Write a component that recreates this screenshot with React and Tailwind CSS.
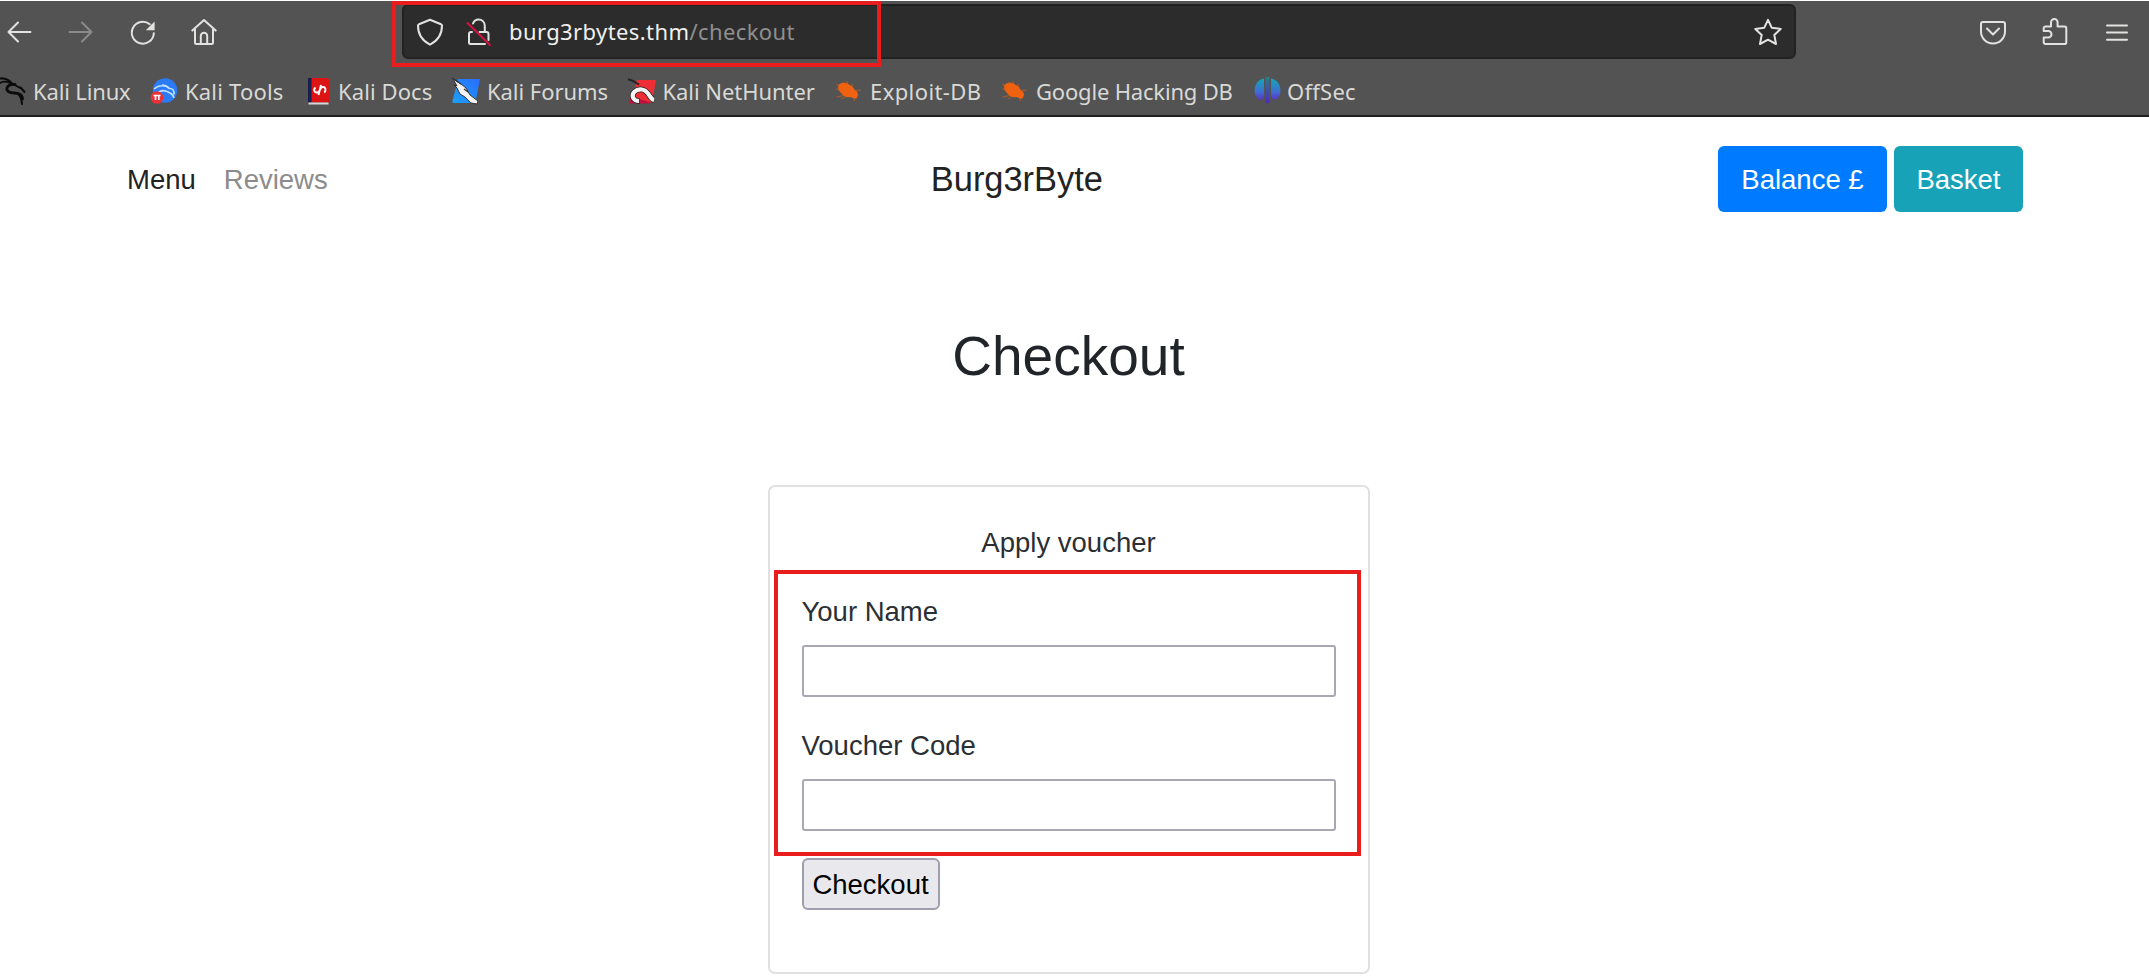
import React from "react";

const line = "fill-none stroke-[#e2e2e0] stroke-2";

function Icon({ children, className = "" }) {
  return (
    <svg viewBox="0 0 28 28" className={`size-7 shrink-0 overflow-visible ${line} ${className}`} strokeLinecap="round" strokeLinejoin="round">
      {children}
    </svg>
  );
}

const BackIcon = () => (
  <Icon><path d="M25.500 14H3.500M13 4.500 3.500 14l9.500 9.500" /></Icon>
);
const ForwardIcon = () => (
  <Icon className="opacity-40"><path d="M2.500 14h22M15 4.500l9.500 9.500-9.500 9.500" /></Icon>
);
const ReloadIcon = () => (
  <Icon>
    <path d="M24.800 15.200A11 11 0 1 1 20.800 6.200" />
    <path d="M25.600 3.400v8.800h-8.800z" className="fill-[#e2e2e0] stroke-none" />
  </Icon>
);
const HomeIcon = () => (
  <Icon>
    <path d="M1.300 12.600 13 2l11.700 10.600M4 11.500V24.500a1.500 1.500 0 0 0 1.500 1.500h15a1.500 1.500 0 0 0 1.500-1.500V11.500" />
    <path d="M9.800 25.500v-7.500a3.200 3.200 0 0 1 6.400 0v7.500" />
  </Icon>
);
const ShieldIcon = () => (
  <Icon>
    <path d="M14 1.800 25 6.200a1.500 1.500 0 0 1 1 1.400C26 15.800 21.500 23 14 26.700 6.500 23 2 15.800 2 7.600a1.500 1.500 0 0 1 1-1.400z" />
  </Icon>
);
const LockOffIcon = () => (
  <Icon>
    <path d="M9 5.500C10 3 12 1.500 14.500 1.500c3.800 0 6.300 2.800 6.300 6.500v5M8 14H7a2 2 0 0 0-2 2v8.500A1.500 1.500 0 0 0 6.500 26H21M15.500 14h7a2 2 0 0 1 2 2v6" />
    <path d="M3.500 5 26 27" className="stroke-[#d3123f]" />
  </Icon>
);
const StarIcon = () => (
  <Icon>
    <path d="m14 1.800 3.700 7.900 9 1.200-6.400 6 1.700 9.100-8-4.300-8 4.300 1.700-9.100-6.400-6 9-1.200z" />
  </Icon>
);
const PocketIcon = () => (
  <Icon>
    <path d="M4 4h20a2 2 0 0 1 2 2v7.500a12 12 0 0 1-24 0V6a2 2 0 0 1 2-2z" />
    <path d="m8 10.500 6 6 6-6" />
  </Icon>
);
const PuzzleIcon = () => (
  <Icon>
    <path d="M4.500 8.500H10V4.300a3.300 3.300 0 0 1 6.600 0v4.200h6.900A1.800 1.800 0 0 1 25.300 10.300v14a1.800 1.800 0 0 1-1.800 1.800h-19a1.800 1.800 0 0 1-1.800-1.800V19.500h4.500a3.300 3.300 0 0 0 0-6.600H2.700v-2.600a1.800 1.800 0 0 1 1.800-1.800z" />
  </Icon>
);
const MenuIcon = () => (
  <Icon><path d="M4 7.500h20M4 14.500h20M4 21.700h20" /></Icon>
);

function Mark({ children }) {
  return <svg viewBox="0 0 28 28" className="size-7 shrink-0 overflow-visible">{children}</svg>;
}

const DragonMark = () => (
  <Mark>
    <g className="fill-none stroke-[#0b0b0b]" strokeLinecap="round" strokeLinejoin="round">
      <path d="M0 2C5 .5 10 1.500 14.500 7" strokeWidth="2" />
      <path d="M1 6.500c4-2.500 8-2.500 12 0" strokeWidth="1.800" />
      <path d="M17 7.500c-4-.5-7 .5-8 3.500-1 3.500 3 5 7 5 5 0 8.500 2 8.500 6" strokeWidth="2.800" />
      <path d="M16 7.500l8 4.500M22.500 10.500l4 4.500M19 16c3 2 4.500 5 5 11" strokeWidth="2" />
    </g>
  </Mark>
);
const ToolsMark = () => (
  <Mark>
    <circle cx="15" cy="13.500" r="12.200" className="fill-[#2b7bf6]" />
    <path d="M4 12c5-4.500 12-4 15-.5 3.500-.5 5.500 2 5 6M8 15.500c4-3 9-1.500 12 .5 2.500 1 3.500 3 4 5M12 8c3 0 5 1 7 3" className="fill-none stroke-[#bfe0ff]" strokeWidth="1.600" />
    <circle cx="7" cy="20.500" r="6.300" className="fill-[#ec3038]" />
    <path d="M3.500 18.500h7M5.500 18.500v4.500M8.800 18.500v4.500" className="fill-none stroke-white" strokeWidth="1.600" />
  </Mark>
);
const DocsMark = () => (
  <Mark>
    <path d="M5 1H9v24.500H5z" className="fill-[#1b1f4e]" />
    <path d="M8.500 1h15.500a2 2 0 0 1 2 2v22.500H8.500z" className="fill-[#dc1414]" />
    <path d="M5.500 25.500h20v2h-20z" className="fill-[#d8d8d8]" />
    <path d="M12.500 10.500c-2.500 2-1 5.500 1.800 5 3-.5 2.500-5 5.200-5.500 3-.5 4 3 1.800 5.500M18 8l-2.500 10" className="fill-none stroke-white" strokeWidth="1.900" />
  </Mark>
);
const ForumsMark = () => (
  <Mark>
    <defs>
      <linearGradient id="forums" x1="1" y1="0" x2="0" y2="1">
        <stop offset="0" stopColor="#2a6cfb" />
        <stop offset="1" stopColor="#1ba2fb" />
      </linearGradient>
    </defs>
    <path d="M6 2h22l-4.500 23a1.500 1.500 0 0 1-1.500 1H2a1.500 1.500 0 0 1-1.500-2z" fill="url(#forums)" />
    <path d="M1 2l8 5 5 4 4 7 8 6-1 3-6-1-6-6-5-3-3-6-3-3 3 1z" className="fill-[#f4f4f4] stroke-[#333]" strokeWidth="1" />
    <path d="M0 1l9 6M12 12l4 3" className="fill-none stroke-[#333]" strokeWidth="1.200" />
  </Mark>
);
const NetHunterMark = () => (
  <Mark>
    <path d="M9 3h19l-4 22.500H3z" className="fill-[#ef2d35]" />
    <path d="M2 19l21 6.500-1.500 1H2z" className="fill-[#c2103d]" />
    <path d="M26 23c-4.500-1-5-9.500-12-10.500-6-1-10.500 3.500-9 8 1 2.500 3.500 3.500 6.500 3.500" className="fill-none stroke-[#222]" strokeWidth="5.600" />
    <path d="M26 23c-4.500-1-5-9.500-12-10.500-6-1-10.500 3.500-9 8 1 2.500 3 3.500 6 3.500" className="fill-none stroke-[#f4f4f4]" strokeWidth="4.200" />
    <path d="M0 2.500c4 0 7 3 11 5" className="fill-none stroke-[#222]" strokeWidth="2" />
  </Mark>
);
const BugMark = () => (
  <Mark>
    <g transform="translate(-1.500)">
      <path d="M5 8c3-3 8-3 11 0 3 1 4.500 3 5 5 2.500 1 3.500 3 3.500 5l-1.500 3.500c-2 .5-4.500-1-6-1.500-4 1-7-1-9-3.500C5 14 4 11 5 8z" className="fill-[#f0620f]" />
      <path d="M3 12l5 1M3 20c3 0 5-1 8-2M8 22l4-2M9 5l3 3M13 4l2 5M19 7l-1 4M27 13l-6 1M20 20l1 4M3 7l4 3" className="fill-none stroke-[#f0620f]/45" strokeWidth="1.300" />
    </g>
  </Mark>
);
const OffSecMark = () => (
  <Mark>
    <defs>
      <linearGradient id="offsec" x1="0" y1="0" x2="0" y2="1">
        <stop offset="0" stopColor="#12a5b8" />
        <stop offset="0.600" stopColor="#3f6fd0" />
        <stop offset="1" stopColor="#5a2fc8" />
      </linearGradient>
      <linearGradient id="offsecBar" x1="0" y1="0" x2="0" y2="1">
        <stop offset="0" stopColor="#2b7d86" />
        <stop offset="1" stopColor="#5426c4" />
      </linearGradient>
    </defs>
    <path d="M12 1.500v16L10 23.500C5 22 2.500 18.500 2.500 13.500S6 2 12 1.500z" fill="url(#offsec)" />
    <path d="M19 1.500v16l2 6c5-1.500 7.500-5 7.500-10S25 2 19 1.500z" fill="url(#offsec)" />
    <path d="M13.500 0h4v25l-2 2-2-2z" fill="url(#offsecBar)" />
  </Mark>
);

const bookmarks = [
  ["Kali Linux", DragonMark, "tracking-[-0.15px]"],
  ["Kali Tools", ToolsMark, "tracking-[0.2px]"],
  ["Kali Docs", DocsMark, "tracking-[0.1px]"],
  ["Kali Forums", ForumsMark, "tracking-[-0.05px]"],
  ["Kali NetHunter", NetHunterMark, "tracking-[-0.05px]"],
  ["Exploit-DB", BugMark, "tracking-[0.4px]"],
  ["Google Hacking DB", BugMark, "tracking-[-0.18px]"],
  ["OffSec", OffSecMark, "tracking-[0.25px]"],
];

function BrowserChrome() {
  return (
    <header className="relative mt-px h-[116px] border-b-2 border-[#1f1f1f] bg-[#535353] font-['Noto_Sans',sans-serif] text-[22px] leading-[30px]">
      <div className="flex h-[61px] items-center pl-[5px] pr-[18px]">
        <div className="flex gap-[34px]">
          <BackIcon />
          <ForwardIcon />
          <ReloadIcon />
          <HomeIcon />
        </div>
        <div className="ml-[183px] flex h-[55px] w-[1394px] items-center rounded-[6px] border-2 border-[#222] bg-[#2c2c2c] pl-[12px] pr-[12px]">
          <ShieldIcon />
          <div className="ml-[20px] flex"><LockOffIcon /></div>
          <span className="ml-[17px] whitespace-pre pb-[2px] tracking-[0.4px] text-[#f0f0ee]">burg3rbytes.thm<span className="text-[#8f8f8f]">/checkout</span></span>
          <div className="ml-auto flex"><StarIcon /></div>
        </div>
        <div className="ml-auto flex gap-[34px]">
          <PocketIcon />
          <PuzzleIcon />
          <MenuIcon />
        </div>
      </div>
      <nav className="-ml-[2px] grid w-[1400px] grid-cols-[152px_153px_149px_175.5px_207.5px_166px_251px_120px] pt-[14px] text-[#d9d9d6]">
        {bookmarks.map(([label, Logo, tracking]) => (
          <a key={label} className={`flex h-[30px] items-center gap-[7px] whitespace-nowrap ${tracking}`}>
            <Logo />
            <span>{label}</span>
          </a>
        ))}
      </nav>
      <div className="absolute left-[392px] top-0 h-[66px] w-[489px] border-4 border-[#e91d1d]" />
    </header>
  );
}

function Field({ label, className = "" }) {
  return (
    <label className={`flex flex-col ${className}`}>
      <span>{label}</span>
      <input className="mt-[13px] h-[52px] w-full rounded-[3px] border-2 border-[#a8a8b4] bg-white outline-none" />
    </label>
  );
}

export default function App() {
  return (
    <div className="h-[980px] overflow-hidden bg-white font-['Liberation_Sans',Arial,sans-serif] text-[27.5px] leading-[41px] text-[#2b2f33]">
      <BrowserChrome />
      <div className="flex h-[124px] items-center justify-between pl-[127px] pr-[126px]">
        <nav className="flex gap-[28px]">
          <a className="text-[#222]">Menu</a>
          <a className="text-[#8c8c8c]">Reviews</a>
        </nav>
        <div className="mr-[12px] text-[34.4px] text-[#222]">Burg3rByte</div>
        <div className="flex justify-end gap-[7px]">
          <button className="h-[66px] w-[169px] rounded-[6px] bg-[#007bff] text-white">Balance £</button>
          <button className="h-[66px] w-[129px] rounded-[6px] bg-[#17a2b8] text-white">Basket</button>
        </div>
      </div>
      <div className="pr-[12px]">
        <h1 className="mt-[82px] text-center text-[55px] leading-[66px] text-[#212529]">Checkout</h1>
        <main className="relative mx-auto mt-[96px] h-[489px] w-[602px] rounded-[7px] border-2 border-[#e0e0e0] px-[32px] pt-[35px]">
          <h2 className="text-center">Apply voucher</h2>
          <Field label="Your Name" className="mt-[28px]" />
          <Field label="Voucher Code" className="mt-[28px]" />
          <button className="mt-[27px] h-[52px] w-[138px] rounded-[6px] border-2 border-[#9f9eae] bg-[#e9e9ed] text-black">Checkout</button>
          <div className="absolute left-[4px] top-[83px] h-[286px] w-[587px] border-4 border-[#e91d1d]" />
        </main>
      </div>
    </div>
  );
}
